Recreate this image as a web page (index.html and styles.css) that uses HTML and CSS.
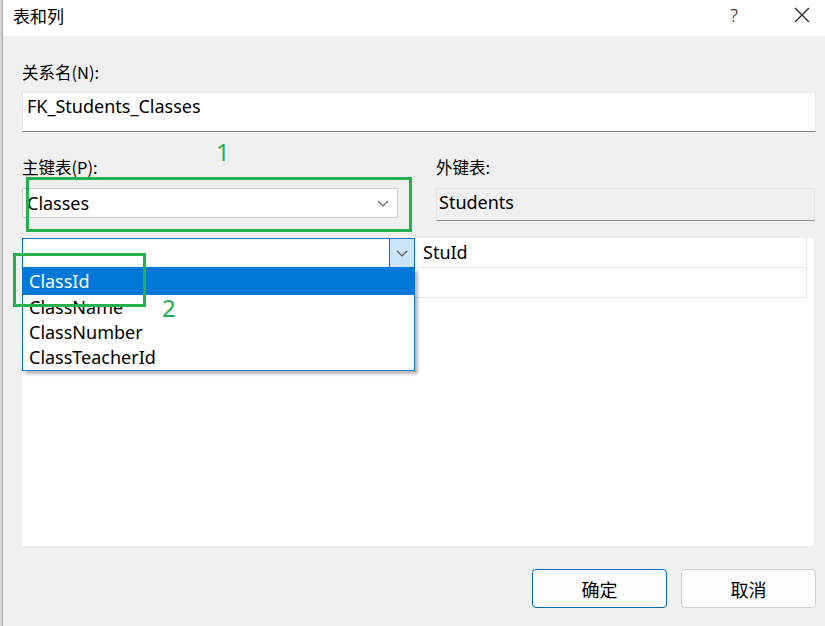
FILE: index.html
```html
<!DOCTYPE html>
<html lang="zh">
<head>
<meta charset="utf-8">
<title>表和列</title>
<link rel="stylesheet" href="styles.css">
</head>
<body>
<div class="screen">
  <div class="behind"><div class="behind-line"></div></div>
  <div class="dialog">
    <div class="titlebar">
      <span class="title">表和列</span>
      <span class="help">?</span>
      <svg class="close" width="16" height="16" viewBox="0 0 16 16"><path d="M1 1 L15 15 M15 1 L1 15" stroke="#202020" stroke-width="1.2" fill="none"/></svg>
    </div>
    <div class="content">
      <div class="label first">关系名(N):</div>
      <div class="textbox">FK_Students_Classes</div>

      <div class="tables">
        <div class="col left">
          <div class="label">主键表(P):</div>
          <div class="combo">
            <span>Classes</span>
            <svg class="chev" width="12" height="7" viewBox="0 0 12 7"><path d="M1 1 L6 6 L11 1" stroke="#606060" stroke-width="1.1" fill="none"/></svg>
          </div>
        </div>
        <div class="col right">
          <div class="label">外键表:</div>
          <div class="readonly">Students</div>
        </div>
      </div>

      <div class="grid">
        <div class="grow">
          <div class="cell editcell">
            <div class="editcombo">
              <span class="editval"></span>
              <div class="dropbtn"><svg width="12" height="7" viewBox="0 0 12 7"><path d="M1 1 L6 6 L11 1" stroke="#505050" stroke-width="1.1" fill="none"/></svg></div>
            </div>
          </div>
          <div class="cell fk">StuId</div>
        </div>
        <div class="grow">
          <div class="cell editcell"></div>
          <div class="cell fk"></div>
        </div>
        <ul class="droplist">
          <li class="sel">ClassId</li>
          <li>ClassName</li>
          <li>ClassNumber</li>
          <li>ClassTeacherId</li>
        </ul>
      </div>

      <div class="buttons">
        <button class="btn primary">确定</button>
        <button class="btn">取消</button>
      </div>

      <div class="mark mark1"></div>
      <div class="num num1">1</div>
      <div class="mark mark2"></div>
      <div class="num num2">2</div>
    </div>
  </div>
</div>
</body>
</html>
```
FILE: styles.css
```css
* { box-sizing: border-box; }
html, body { margin: 0; padding: 0; }
body {
  width: 825px;
  height: 626px;
  overflow: hidden;
  font-family: "Noto Sans", "Noto Sans CJK SC", sans-serif;
  color: #000;
  background: #f0f0f0;
}
.screen { display: flex; width: 825px; height: 626px; }
.behind {
  width: 3px;
  background: #d6d6d6;
  display: flex;
  justify-content: flex-end;
}
.behind-line { width: 1px; background: #a8a8a8; }
.dialog {
  flex: 1;
  display: flex;
  flex-direction: column;
  background: #f0f0f0;
}
.titlebar {
  height: 36px;
  background: #fff;
  display: flex;
  align-items: center;
  padding-left: 10px;
  font-family: "Noto Sans CJK SC", sans-serif;
}
.title { font-size: 17px; flex: 1; margin-top: -6px; }
.help {
  font-family: "Noto Sans", sans-serif;
  font-size: 19px;
  font-weight: 300;
  color: #222;
  margin-right: 56px;
  margin-top: -6px;
}
.close { margin-right: 15px; margin-top: -6px; }

.content {
  position: relative;
  flex: 1;
  padding: 0 9px 0 19px;
  display: flex;
  flex-direction: column;
}
.label {
  font-family: "Noto Sans CJK SC", sans-serif;
  font-size: 16.5px;
  line-height: 20px;
  height: 20px;
}
.label.first { margin-top: 26px; }
.textbox {
  margin-top: 10px;
  height: 40px;
  background: #fff;
  border: 1px solid #e6e6e6;
  border-bottom: 1px solid #868686;
  padding-left: 4px;
  font-size: 18px;
  line-height: 27px;
}
.tables {
  display: flex;
  margin-top: 25px;
}
.col { display: flex; flex-direction: column; }
.col.left { width: 376px; }
.col.right { width: 379px; margin-left: 38px; }
.combo {
  margin-top: 11px;
  height: 30px;
  background: #fff;
  border: 1px solid #d0d0d0;
  border-radius: 2px;
  display: flex;
  align-items: center;
  padding-left: 4px;
  font-size: 18px;
}
.combo span { flex: 1; }
.chev { margin-right: 8px; }
.readonly {
  margin-top: 11px;
  height: 33px;
  background: #f0f0f0;
  border: 1px solid #e4e4e4;
  border-bottom: 1px solid #8a8a8a;
  padding-left: 2px;
  font-size: 18px;
  line-height: 27px;
}

.grid {
  position: relative;
  margin-top: 17px;
  width: 792px;
  height: 308px;
  background: #fff;
}
.grow { display: flex; height: 30px; }
.cell { height: 30px; }
.editcell { width: 393px; }
.fk {
  width: 392px;
  border-right: 1px solid #e6e6e6;
  border-bottom: 1px solid #e6e6e6;
  padding-left: 8px;
  font-size: 18px;
  line-height: 28px;
}
.editcombo {
  height: 30px;
  border: 1px solid #0078d7;
  display: flex;
}
.editval { flex: 1; }
.dropbtn {
  width: 25px;
  background: #cce4f7;
  border-left: 1px solid #0078d7;
  display: flex;
  align-items: center;
  justify-content: center;
}
.droplist {
  position: absolute;
  left: 0;
  top: 30px;
  width: 393px;
  margin: 0;
  padding: 0;
  list-style: none;
  border: 1px solid #0078d7;
  background: #fff;
  box-shadow: 3px 3px 3px rgba(0,0,0,0.28);
}
.droplist li {
  height: 25px;
  line-height: 25px;
  padding-left: 6px;
  font-size: 18px;
}
.droplist li.sel { background: #0078d7; color: #fff; height: 27px; line-height: 27px; margin-top: -1px; }

.buttons {
  display: flex;
  justify-content: flex-end;
  gap: 14px;
  margin-top: 23px;
}
.btn {
  width: 135px;
  height: 39px;
  background: #fdfdfd;
  border: 1px solid #d0d0d0;
  border-radius: 4px;
  font-family: "Noto Sans CJK SC", sans-serif;
  font-size: 18px;
  color: #000;
  padding: 0;
}
.btn.primary { border-color: #0067c0; }

.mark {
  position: absolute;
  border: 3px solid #22b14c;
}
.mark1 { left: 23px; top: 141px; width: 386px; height: 55px; }
.mark2 { left: 10px; top: 217px; width: 133px; height: 54px; }
.num {
  position: absolute;
  font-family: "Noto Sans", sans-serif;
  font-size: 24px;
  color: #22b14c;
  line-height: 24px;
}
.num1 { left: 213px; top: 104px; }
.num2 { left: 159px; top: 260px; }
```
